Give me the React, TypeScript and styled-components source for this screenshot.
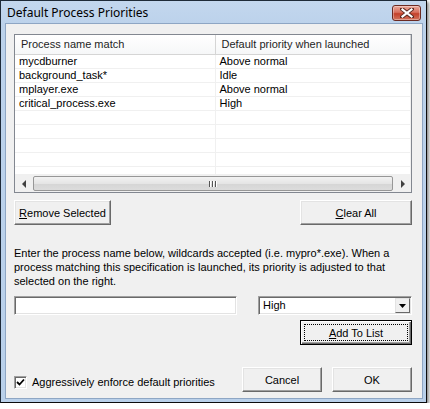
import React, { useState } from 'react';
import styled, { createGlobalStyle } from 'styled-components';

const GlobalStyle = createGlobalStyle`
    html, body {
        margin: 0;
        padding: 0;
        background: #ffffff;
    }
    body {
        font-family: 'Liberation Sans', Arial, sans-serif;
        font-size: 11px;
        color: #000;
    }
`;

const rows = [
    { name: 'mycdburner', priority: 'Above normal' },
    { name: 'background_task*', priority: 'Idle' },
    { name: 'mplayer.exe', priority: 'Above normal' },
    { name: 'critical_process.exe', priority: 'High' },
];

const EMPTY_ROWS = 5;

const CloseGlyph = () => (
    <svg width='14' height='10' viewBox='0 0 14 10'>
        <path d='M2 1 L12 9 M12 1 L2 9' stroke='#5a2a22' strokeWidth='4' strokeLinecap='square' />
        <path d='M2.5 1.5 L11.5 8.5 M11.5 1.5 L2.5 8.5' stroke='#ffffff' strokeWidth='2.2' strokeLinecap='square' />
    </svg>
);

const Arrow = ({ dir }: { dir: 'left' | 'right' | 'down' }) => {
    const d = dir === 'left' ? 'M5 0 L5 8 L1 4 Z' : dir === 'right' ? 'M1 0 L1 8 L5 4 Z' : 'M0 1 L7 1 L3.5 5 Z';
    return (
        <svg width={dir === 'down' ? 7 : 6} height={dir === 'down' ? 6 : 8} viewBox={dir === 'down' ? '0 0 7 6' : '0 0 6 8'}>
            <path d={d} fill={dir === 'down' ? '#000' : '#404040'} />
        </svg>
    );
};

const CheckGlyph = () => (
    <svg width='9' height='9' viewBox='0 0 9 9'>
        <path d='M1 4 L3.5 6.5 L8 1.5' stroke='#000' strokeWidth='1.8' fill='none' />
    </svg>
);

export default function App() {
    const [processName, setProcessName] = useState('');
    const [enforce, setEnforce] = useState(true);

    return (
        <>
            <GlobalStyle />
            <Window>
                <TitleBar>
                    <Title>Default Process Priorities</Title>
                    <CloseButton aria-label='Close'>
                        <CloseGlyph />
                    </CloseButton>
                </TitleBar>
                <Body>
                    <ListView>
                        <HeaderRow>
                            <HeaderCell $width={201}>Process name match</HeaderCell>
                            <HeaderCell $width={196}>Default priority when launched</HeaderCell>
                        </HeaderRow>
                        <Rows>
                            {rows.map(r => (
                                <Row key={r.name}>
                                    <Cell $width={201}>{r.name}</Cell>
                                    <Cell $width={196}>{r.priority}</Cell>
                                </Row>
                            ))}
                            {Array.from({ length: EMPTY_ROWS }).map((_, i) => (
                                <Row key={i}>
                                    <Cell $width={201} />
                                    <Cell $width={196} />
                                </Row>
                            ))}
                        </Rows>
                        <HScroll>
                            <ScrollArrow>
                                <Arrow dir='left' />
                            </ScrollArrow>
                            <Thumb>
                                <Grip>
                                    <i />
                                    <i />
                                    <i />
                                </Grip>
                            </Thumb>
                            <ScrollArrow>
                                <Arrow dir='right' />
                            </ScrollArrow>
                        </HScroll>
                    </ListView>

                    <ButtonRow>
                        <Button $width={97}>
                            <u>R</u>emove Selected
                        </Button>
                        <Button $width={112}>
                            <u>C</u>lear All
                        </Button>
                    </ButtonRow>

                    <Description>
                        Enter the process name below, wildcards accepted (i.e. mypro*.exe). When a
                        <br />
                        process matching this specification is launched, its priority is adjusted to that
                        <br />
                        selected on the right.
                    </Description>

                    <InputRow>
                        <TextField value={processName} onChange={e => setProcessName(e.target.value)} />
                        <Combo>
                            <ComboValue>High</ComboValue>
                            <ComboButton>
                                <Arrow dir='down' />
                            </ComboButton>
                        </Combo>
                    </InputRow>

                    <AddRow>
                        <DefaultButton $width={112}>
                            <FocusRing>
                                <u>A</u>dd To List
                            </FocusRing>
                        </DefaultButton>
                    </AddRow>

                    <Footer>
                        <CheckLabel onClick={() => setEnforce(v => !v)}>
                            <CheckBox>{enforce && <CheckGlyph />}</CheckBox>
                            Aggressively enforce default priorities
                        </CheckLabel>
                        <FooterButtons>
                            <Button $width={80}>Cancel</Button>
                            <Button $width={80}>OK</Button>
                        </FooterButtons>
                    </Footer>
                </Body>
            </Window>
        </>
    );
}

const Window = styled.div`
    width: 427px;
    height: 403px;
    box-sizing: border-box;
    display: flex;
    flex-direction: column;
    background: linear-gradient(to bottom, #c3d7ee 0px, #bcd2eb 24px, #b9d0ea 100%);
    border: 1px solid #1e2a38;
    border-right-color: #0c0c0c;
    border-bottom-color: #0c0c0c;
    box-shadow: 2px 2px 3px rgba(0, 0, 0, 0.45);
`;

const TitleBar = styled.div`
    height: 22px;
    display: flex;
    align-items: center;
    justify-content: space-between;
    padding: 0 5px 0 6px;
`;

const Title = styled.span`
    font-family: 'Noto Sans', 'Open Sans', sans-serif;
    font-size: 12px;
    color: #000;
    margin-top: 1px;
`;

const CloseButton = styled.div`
    width: 27px;
    height: 14px;
    margin-top: 1px;
    border: 1px solid #6b2a22;
    border-radius: 3px;
    background: linear-gradient(to bottom, #e9a99c 0%, #d8705e 45%, #c4402a 55%, #d2735c 100%);
    display: flex;
    align-items: center;
    justify-content: center;
    box-shadow: inset 0 0 0 1px rgba(255, 255, 255, 0.35);
`;

const Body = styled.div`
    flex: 1;
    margin: 0 3px 3px 4px;
    background: #f0f0f0;
    border: 1px solid #8ea6c4;
    padding: 10px 10px 0 8px;
    display: flex;
    flex-direction: column;
`;

const ListView = styled.div`
    width: 398px;
    height: 159px;
    box-sizing: border-box;
    border: 1px solid #828790;
    background: #ffffff;
    display: flex;
    flex-direction: column;
`;

const HeaderRow = styled.div`
    height: 19px;
    display: flex;
    background: linear-gradient(to bottom, #ffffff 0%, #f6f7f8 100%);
    border-bottom: 1px solid #d5d5d5;
`;

const HeaderCell = styled.div<{ $width: number }>`
    width: ${({ $width }) => $width}px;
    box-sizing: border-box;
    padding-left: 6px;
    line-height: 19px;
    color: #1e1e1e;
    border-right: 1px solid #d5d5d5;
    white-space: nowrap;
`;

const Rows = styled.div`
    flex: 1;
    overflow: hidden;
`;

const Row = styled.div`
    height: 14px;
    display: flex;
    border-bottom: 1px solid #f0f0f0;
    box-sizing: border-box;
`;

const Cell = styled.div<{ $width: number }>`
    width: ${({ $width }) => $width}px;
    box-sizing: border-box;
    padding-left: 4px;
    line-height: 13px;
    border-right: 1px solid #f0f0f0;
    white-space: nowrap;
`;

const HScroll = styled.div`
    height: 17px;
    display: flex;
    align-items: stretch;
    background: #f0f0f0;
    border-top: 1px solid #f0f0f0;
`;

const ScrollArrow = styled.div`
    width: 17px;
    display: flex;
    align-items: center;
    justify-content: center;
`;

const Thumb = styled.div`
    flex: 1;
    margin: 1px 1px;
    border: 1px solid #979797;
    border-radius: 2px;
    background: linear-gradient(to bottom, #f2f2f2 0%, #e5e5e5 50%, #d5d5d5 51%, #dcdcdc 100%);
    display: flex;
    align-items: center;
    justify-content: center;
`;

const Grip = styled.div`
    display: flex;
    gap: 1px;
    i {
        display: block;
        width: 1px;
        height: 6px;
        background: #555;
        border-right: 1px solid #fff;
    }
`;

const ButtonRow = styled.div`
    margin-top: 7px;
    display: flex;
    justify-content: space-between;
    width: 398px;
`;

const Button = styled.div<{ $width: number }>`
    width: ${({ $width }) => $width}px;
    height: 25px;
    box-sizing: border-box;
    display: flex;
    align-items: center;
    justify-content: center;
    background: #f0f0f0;
    border: 1px solid;
    border-color: #ffffff #696969 #696969 #ffffff;
    box-shadow: inset -1px -1px 0 #a0a0a0, inset 1px 1px 0 #e3e3e3;
    color: #000;
    white-space: nowrap;
`;

const DefaultButton = styled(Button)`
    border: 1px solid #000;
    box-shadow: inset 1px 1px 0 #ffffff, inset -1px -1px 0 #696969, inset -2px -2px 0 #a0a0a0;
    padding: 3px;
`;

const FocusRing = styled.div`
    width: 100%;
    height: 100%;
    box-sizing: border-box;
    border: 1px dotted #000;
    display: flex;
    align-items: center;
    justify-content: center;
`;

const Description = styled.p`
    margin: 21px 0 0 0;
    line-height: 14px;
    color: #000;
    white-space: nowrap;
`;

const InputRow = styled.div`
    margin-top: 8px;
    width: 398px;
    display: flex;
    justify-content: space-between;
`;

const Sunken = styled.div`
    height: 19px;
    box-sizing: border-box;
    border: 1px solid;
    border-color: #a0a0a0 #ffffff #ffffff #a0a0a0;
    box-shadow: inset 1px 1px 0 #696969, inset -1px -1px 0 #e3e3e3;
    background: #fff;
`;

const TextField = styled(Sunken).attrs({ as: 'input' })`
    width: 223px;
    padding: 0 4px;
    font: inherit;
    outline: none;
`;

const Combo = styled(Sunken)`
    width: 154px;
    display: flex;
    align-items: stretch;
    padding: 1px;
`;

const ComboValue = styled.div`
    flex: 1;
    padding-left: 3px;
    line-height: 15px;
`;

const ComboButton = styled.div`
    width: 15px;
    box-sizing: border-box;
    background: #f0f0f0;
    border: 1px solid;
    border-color: #e3e3e3 #696969 #696969 #e3e3e3;
    display: flex;
    align-items: center;
    justify-content: center;
`;

const AddRow = styled.div`
    margin-top: 5px;
    width: 398px;
    display: flex;
    justify-content: flex-end;
`;

const Footer = styled.div`
    margin-top: 22px;
    width: 398px;
    display: flex;
    align-items: center;
    justify-content: space-between;
`;

const CheckLabel = styled.label`
    display: flex;
    align-items: center;
    gap: 5px;
    margin-top: 5px;
    cursor: default;
`;

const CheckBox = styled.span`
    width: 13px;
    height: 13px;
    box-sizing: border-box;
    background: #fff;
    border: 1px solid;
    border-color: #a0a0a0 #ffffff #ffffff #a0a0a0;
    box-shadow: inset 1px 1px 0 #696969, inset -1px -1px 0 #e3e3e3;
    display: flex;
    align-items: center;
    justify-content: center;
`;

const FooterButtons = styled.div`
    display: flex;
    gap: 10px;
`;
